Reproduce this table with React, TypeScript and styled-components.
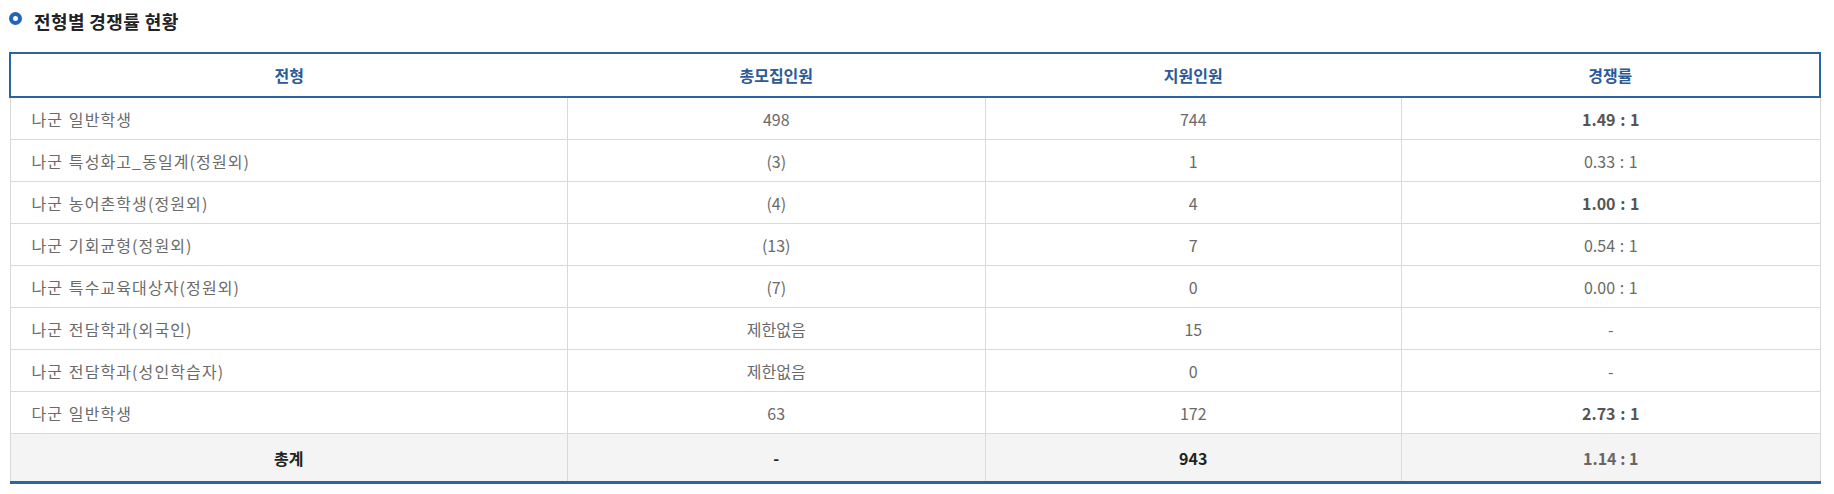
import * as React from 'react';
import styled, { createGlobalStyle } from 'styled-components';

type Row = {
  name: string;
  quota: string;
  applied: string;
  rate: string;
  strong?: boolean;
};

const rows: Row[] = [
  { name: '나군 일반학생', quota: '498', applied: '744', rate: '1.49 : 1', strong: true },
  { name: '나군 특성화고_동일계(정원외)', quota: '(3)', applied: '1', rate: '0.33 : 1' },
  { name: '나군 농어촌학생(정원외)', quota: '(4)', applied: '4', rate: '1.00 : 1', strong: true },
  { name: '나군 기회균형(정원외)', quota: '(13)', applied: '7', rate: '0.54 : 1' },
  { name: '나군 특수교육대상자(정원외)', quota: '(7)', applied: '0', rate: '0.00 : 1' },
  { name: '나군 전담학과(외국인)', quota: '제한없음', applied: '15', rate: '-' },
  { name: '나군 전담학과(성인학습자)', quota: '제한없음', applied: '0', rate: '-' },
  { name: '다군 일반학생', quota: '63', applied: '172', rate: '2.73 : 1', strong: true },
];

const App = () => (
  <Page>
    <GlobalStyle />
    <Heading>
      <Bullet />
      전형별 경쟁률 현황
    </Heading>
    <Table>
      <colgroup>
        <col style={{ width: '30.8%' }} />
        <col style={{ width: '23.07%' }} />
        <col style={{ width: '23.01%' }} />
        <col />
      </colgroup>
      <thead>
        <tr>
          <Th>전형</Th>
          <Th>총모집인원</Th>
          <Th>지원인원</Th>
          <Th>경쟁률</Th>
        </tr>
      </thead>
      <tbody>
        {rows.map(row => (
          <tr key={row.name}>
            <Td align="left">{row.name}</Td>
            <Td>{row.quota}</Td>
            <Td>{row.applied}</Td>
            <Td strong={row.strong}>{row.rate}</Td>
          </tr>
        ))}
      </tbody>
      <tfoot>
        <tr>
          <TotalCell>총계</TotalCell>
          <TotalCell>-</TotalCell>
          <TotalCell>943</TotalCell>
          <TotalCell muted>1.14 : 1</TotalCell>
        </tr>
      </tfoot>
    </Table>
  </Page>
);

const GlobalStyle = createGlobalStyle`
  body {
    margin: 0;
    background: #fff;
    font-family: "Noto Sans CJK KR", "Noto Sans", sans-serif;
  }
`;

const Page = styled.div`
  padding: 8px 13px 0 9px;
`;

const Heading = styled.h3`
  display: flex;
  align-items: center;
  margin: 0 0 18px;
  height: 26px;
  font-size: 18px;
  font-weight: 700;
  color: #222;
  letter-spacing: 0.4px;
`;

const Bullet = styled.span`
  width: 13px;
  height: 13px;
  box-sizing: border-box;
  border-radius: 50%;
  border: 4.5px solid #2264b8;
  margin: -5px 12px 0 0;
`;

const Table = styled.table`
  width: 100%;
  border-collapse: collapse;
  table-layout: fixed;
  font-size: 16px;
`;

const Th = styled.th`
  height: 42px;
  padding: 0;
  border-top: 2px solid #2a64a6;
  border-bottom: 2px solid #2a64a6;
  font-size: 16px;
  font-weight: 700;
  color: #2c5a96;
  text-align: center;

  &:first-child {
    border-left: 2px solid #2a64a6;
  }
  &:last-child {
    border-right: 2px solid #2a64a6;
  }
`;

const Td = styled.td<{ align?: string; strong?: boolean }>`
  height: 41px;
  padding: ${p => (p.align === 'left' ? '0 0 0 21px' : '0')};
  border: 1px solid #d9d9d9;
  text-align: ${p => p.align || 'center'};
  letter-spacing: ${p => (p.align === 'left' ? '1.1px' : '0')};
  word-spacing: 1px;
  color: ${p => (p.strong ? '#555' : '#6a6a6a')};
  font-weight: ${p => (p.strong ? 700 : 400)};
`;

const TotalCell = styled.td<{ muted?: boolean }>`
  height: 47px;
  padding: 0;
  background: #f4f4f4;
  border: 1px solid #d9d9d9;
  border-bottom: 3px solid #2a64a6;
  text-align: center;
  font-weight: 700;
  color: ${p => (p.muted ? '#666' : '#222')};
`;

export default App;
